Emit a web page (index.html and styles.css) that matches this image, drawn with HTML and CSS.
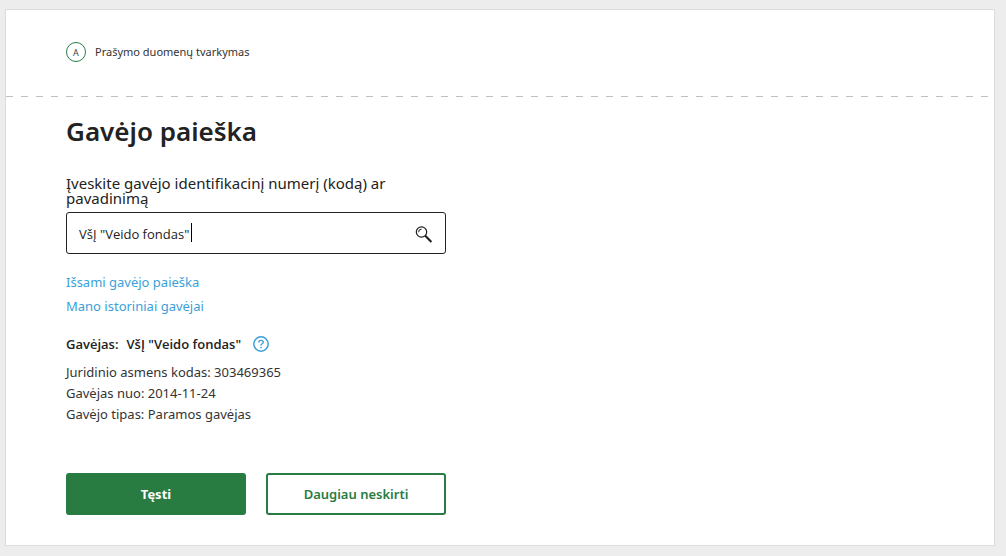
FILE: index.html
```html
<!DOCTYPE html>
<html lang="lt">
<head>
<meta charset="utf-8">
<meta name="viewport" content="width=device-width, initial-scale=1">
<title>Gavėjo paieška</title>
<link rel="stylesheet" href="styles.css">
</head>
<body>
<main class="card">
  <header class="step">
    <span class="step-badge">A</span>
    <span class="step-title">Prašymo duomenų tvarkymas</span>
  </header>
  <div class="divider"></div>
  <form class="content">
    <h1 class="title">Gavėjo paieška</h1>
    <label class="label" for="recipient">Įveskite gavėjo identifikacinį numerį (kodą) ar pavadinimą</label>
    <div class="search">
      <div class="search-field">
        <input class="search-input" id="recipient" type="text" value="VšĮ &quot;Veido fondas&quot;">
        <span class="caret" aria-hidden="true"></span>
      </div>
      <button class="search-button" type="button" aria-label="Ieškoti">
        <svg width="18" height="18" viewBox="0 0 18 18" fill="none" stroke="#1f1f1f">
          <circle cx="6.5" cy="7" r="5.2" stroke-width="1.2"/>
          <path d="M3.6 7.2A3 3 0 0 1 6.6 4.1" stroke-width="1"/>
          <path d="M10.3 10.8L16.4 16.9" stroke-width="2.1"/>
        </svg>
      </button>
    </div>
    <nav class="links">
      <a class="link" href="#">Išsami gavėjo paieška</a>
      <a class="link" href="#">Mano istoriniai gavėjai</a>
    </nav>
    <div class="recipient">
      <span class="recipient-key">Gavėjas:</span>
      <span class="recipient-name">VšĮ "Veido fondas"</span>
      <button class="help" type="button" aria-label="Pagalba">
        <svg width="16" height="16" viewBox="0 0 16 16" fill="none" stroke="#3a9fd9">
          <circle cx="8" cy="8" r="7.2" stroke-width="1.5"/>
          <path d="M5.8 6.4C5.8 3.6 10.3 3.7 10.3 6.3C10.3 7.8 8 7.8 8 9.5" stroke-width="1.4"/>
          <path d="M8 10.8V12.2" stroke-width="1.4"/>
        </svg>
      </button>
    </div>
    <ul class="details">
      <li>Juridinio asmens kodas: 303469365</li>
      <li>Gavėjas nuo: 2014-11-24</li>
      <li>Gavėjo tipas: Paramos gavėjas</li>
    </ul>
    <div class="actions">
      <button class="button button-primary" type="submit">Tęsti</button>
      <button class="button button-outline" type="button">Daugiau neskirti</button>
    </div>
  </form>
</main>
</body>
</html>
```
FILE: styles.css
```css
* {
  box-sizing: border-box;
}

body {
  margin: 0;
  padding: 9px 11px 10px 5px;
  background: #ededed;
  color: #222;
  font-family: "Noto Sans", "Open Sans", sans-serif;
  font-size: 13px;
}

button,
input {
  font: inherit;
  color: inherit;
}

.card {
  background: #fff;
  border: 1px solid #dcdcdc;
}

.step {
  display: flex;
  align-items: center;
  gap: 9px;
  padding: 32px 60px 34px;
}

.step-badge {
  display: flex;
  align-items: center;
  justify-content: center;
  width: 20px;
  height: 20px;
  border: 1px solid #287c42;
  border-radius: 50%;
  color: #444;
  font-size: 9px;
}

.step-title {
  color: #333;
  font-size: 11px;
  line-height: 20px;
}

.divider {
  height: 1px;
  background: repeating-linear-gradient(to right, #c0c0c0 0 7px, transparent 7px 15px);
}

.content {
  max-width: 500px;
  padding: 14px 60px 30px;
}

.title {
  margin: 0;
  font-size: 26px;
  font-weight: 600;
  line-height: 40px;
}

.label {
  display: block;
  margin: 25px 0 6px;
  font-size: 15px;
  line-height: 15px;
}

.search {
  display: flex;
  align-items: center;
  height: 42px;
  padding: 0 12px;
  border: 1px solid #222;
  border-radius: 3px;
}

.search-field {
  position: relative;
  flex: 1;
}

.search-input {
  width: 100%;
  padding: 2px 0 0;
  border: 0;
  outline: 0;
  background: transparent;
  font-family: "Open Sans", sans-serif;
}

.caret {
  position: absolute;
  top: 0;
  left: 112px;
  width: 1px;
  height: 19px;
  background: #000;
}

.search-button,
.help {
  display: flex;
  padding: 0;
  border: 0;
  background: transparent;
}

.search-button {
  padding-top: 2px;
}

.links {
  display: flex;
  flex-direction: column;
  align-items: flex-start;
  margin-top: 16px;
}

.link {
  color: #3a9fd9;
  line-height: 24px;
  text-decoration: none;
}

.recipient {
  display: flex;
  align-items: center;
  gap: 8px;
  margin-top: 14px;
  font-family: "Open Sans", sans-serif;
  font-weight: 600;
  line-height: 24px;
}

.help {
  margin-left: 4px;
}

.details {
  margin: 6px 0 0;
  padding: 0;
  color: #333;
  line-height: 21px;
  list-style: none;
}

.actions {
  display: grid;
  grid-template-columns: 1fr 1fr;
  gap: 20px;
  margin-top: 48px;
}

.button {
  height: 42px;
  border: 2px solid #287c42;
  border-radius: 3px;
  font-weight: 600;
}

.button-primary {
  background: #287c42;
  color: #fff;
  font-weight: 700;
}

.button-outline {
  background: #fff;
  color: #287c42;
}
```
